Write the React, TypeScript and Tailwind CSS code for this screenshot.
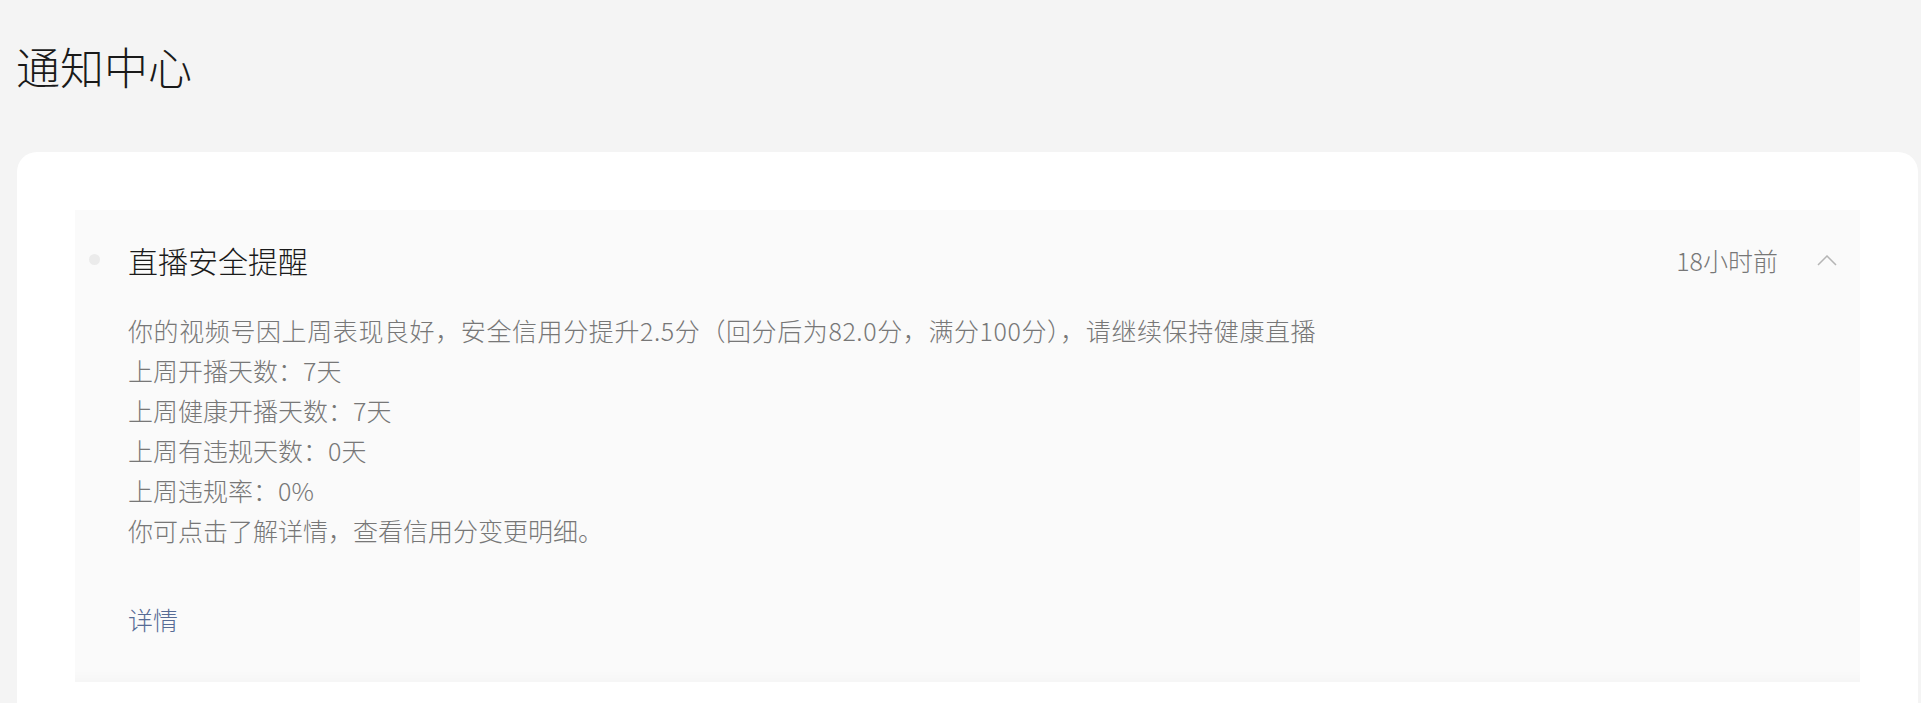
const bodyLines = [
  "你的视频号因上周表现良好，安全信用分提升2.5分（回分后为82.0分，满分100分），请继续保持健康直播",
  "上周开播天数：7天",
  "上周健康开播天数：7天",
  "上周有违规天数：0天",
  "上周违规率：0%",
  "你可点击了解详情，查看信用分变更明细。",
];

function ChevronUp() {
  return (
    <svg width="20" height="11" viewBox="0 0 20 11" fill="none">
      <polyline points="1,10 10,1 19,10" stroke="#b5b5b5" strokeWidth="1.5" />
    </svg>
  );
}

export default function App() {
  return (
    <div className="min-h-screen bg-[#f4f4f4] font-['Noto_Sans_CJK_SC',sans-serif] font-light">
      {/* 标题 */}
      <h1 className="pl-[16px] pt-[44px] text-[44px] leading-[44px] text-[#1a1a1a]">通知中心</h1>

      {/* 白色卡片 */}
      <div className="ml-[17px] mr-[3px] mt-[64px] rounded-t-[20px] bg-white px-[58px] pt-[58px] pb-[40px]">
        <div className="bg-[#fafafa] pt-[30px] pb-[43px] pl-[14px] pr-[23px] shadow-[inset_0_-16px_16px_-16px_rgba(0,0,0,0.04)]">
          <div className="flex">
            <div className="w-[39px] shrink-0 pt-[14px]">
              <div className="h-[11px] w-[11px] rounded-full bg-[#ebebeb]" />
            </div>
            <div className="flex-1">
              <div className="flex h-[40px] items-center justify-between">
                <span className="text-[30px] leading-[40px] text-[#1a1a1a]">直播安全提醒</span>
                <div className="flex items-center gap-[39px]">
                  <span className="text-[25px] leading-[40px] text-[#777777]">18小时前</span>
                  <ChevronUp />
                </div>
              </div>
              <div className="mt-[30px] text-[25px] leading-[40px] text-[#777777]">
                {bodyLines.map((line, i) => (
                  <p key={line} className={i === 0 ? "tracking-[0.6px]" : ""}>
                    {line}
                  </p>
                ))}
              </div>
              <a className="mt-[49px] block text-[25px] leading-[40px] text-[#576b95]">详情</a>
            </div>
          </div>
        </div>
      </div>
    </div>
  );
}
